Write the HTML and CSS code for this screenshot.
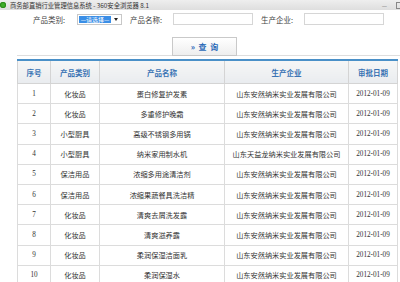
FILE: index.html
```html
<!DOCTYPE html>
<html>
<head>
    <meta charset="UTF-8">
    <title>商务部直销行业管理信息系统</title>
    <link rel="stylesheet" href="styles.css">
</head>
<body>
    <div class="titlebar">
        <span class="logo"></span>
        <span class="title">商务部直销行业管理信息系统 - 360安全浏览器 8.1</span>
        <span class="win-btn">—</span>
        <span class="win-btn max"></span>
    </div>

    <div class="search">
        <div class="search-row">
            <label class="lbl lbl-first">产品类别:</label>
            <div class="select">
                <span class="select-text">—请选择—</span>
                <span class="select-arrow"></span>
            </div>
            <label class="lbl">产品名称:</label>
            <input type="text" class="field">
            <label class="lbl">生产企业:</label>
            <input type="text" class="field">
        </div>
        <div class="btn-row">
            <button type="button" class="btn">»&nbsp;&nbsp;查&nbsp;&nbsp;询</button>
        </div>
    </div>

    <div class="list">
        <table class="grid">
            <colgroup>
                <col style="width:33px">
                <col style="width:49px">
                <col style="width:125px">
                <col style="width:124px">
                <col>
            </colgroup>
            <thead>
                <tr>
                    <th>序号</th>
                    <th>产品类别</th>
                    <th>产品名称</th>
                    <th>生产企业</th>
                    <th>审批日期</th>
                </tr>
            </thead>
            <tbody>
                <tr><td class="num">1</td><td>化妆品</td><td>蛋白修复护发素</td><td>山东安然纳米实业发展有限公司</td><td class="num">2012-01-09</td></tr>
                <tr><td class="num">2</td><td>化妆品</td><td>多重修护晚霜</td><td>山东安然纳米实业发展有限公司</td><td class="num">2012-01-09</td></tr>
                <tr><td class="num">3</td><td>小型厨具</td><td>高级不锈钢多用锅</td><td>山东安然纳米实业发展有限公司</td><td class="num">2012-01-09</td></tr>
                <tr><td class="num">4</td><td>小型厨具</td><td>纳米家用制水机</td><td>山东天益龙纳米实业发展有限公司</td><td class="num">2012-01-09</td></tr>
                <tr><td class="num">5</td><td>保洁用品</td><td>浓缩多用途清洁剂</td><td>山东安然纳米实业发展有限公司</td><td class="num">2012-01-09</td></tr>
                <tr><td class="num">6</td><td>保洁用品</td><td>浓缩果蔬餐具洗洁精</td><td>山东安然纳米实业发展有限公司</td><td class="num">2012-01-09</td></tr>
                <tr><td class="num">7</td><td>化妆品</td><td>清爽去屑洗发露</td><td>山东安然纳米实业发展有限公司</td><td class="num">2012-01-09</td></tr>
                <tr><td class="num">8</td><td>化妆品</td><td>清爽滋养露</td><td>山东安然纳米实业发展有限公司</td><td class="num">2012-01-09</td></tr>
                <tr><td class="num">9</td><td>化妆品</td><td>柔润保湿洁面乳</td><td>山东安然纳米实业发展有限公司</td><td class="num">2012-01-09</td></tr>
                <tr><td class="num">10</td><td>化妆品</td><td>柔润保湿水</td><td>山东安然纳米实业发展有限公司</td><td class="num">2012-01-09</td></tr>
            </tbody>
        </table>
    </div>
</body>
</html>
```

FILE: styles.css
```css
body {
    margin: 0;
    background: #fff;
    font-family: "Noto Sans CJK SC", "Liberation Sans", sans-serif;
    color: #333;
    overflow: hidden;
}
.titlebar {
    height: 10px;
    display: flex;
    align-items: center;
    background: linear-gradient(#eeeeee, #dedede);
    font-size: 6.3px;
    color: #333;
}
.logo {
    width: 6px;
    height: 6px;
    border-radius: 50%;
    background: #3fae2a;
    box-shadow: inset 0 0 0 1px #2d8a1c;
}
.title {
    margin-left: 4px;
    flex: 1;
    white-space: nowrap;
}
.win-btn {
    color: #777;
    font-size: 6px;
    margin-right: 9px;
}
.win-btn.max {
    width: 4px;
    height: 5px;
    border: 1px solid #888;
    margin-right: -2px;
}
.search {
    height: 42px;
    padding-top: 3px;
}
.search-row {
    display: flex;
    align-items: center;
    height: 12px;
    font-size: 7.5px;
    color: #444;
}
.lbl {
    width: 43px;
    margin-left: 8px;
    white-space: nowrap;
}
.lbl-first {
    width: 44px;
    margin-left: 33px;
}
.select {
    width: 45px;
    height: 11px;
    box-sizing: border-box;
    border: 1px solid #c8c8c8;
    display: flex;
    align-items: center;
    padding: 1px;
}
.select-text {
    flex: 1;
    height: 7px;
    line-height: 7px;
    background: #3a8ee6;
    color: #fff;
    font-size: 6px;
    text-align: center;
    white-space: nowrap;
    overflow: hidden;
}
.select-arrow {
    width: 0;
    height: 0;
    margin: 0 2px 0 3px;
    border-left: 2px solid transparent;
    border-right: 2px solid transparent;
    border-top: 3px solid #222;
}
.field {
    width: 80px;
    height: 12px;
    box-sizing: border-box;
    border: 1px solid #d6d6d6;
    padding: 0;
    margin: 0;
}
.btn-row {
    margin: 6px 0 0 172px;
}
.btn {
    width: 65px;
    height: 19px;
    border: 1px solid #c9c9c9;
    background: linear-gradient(#ffffff, #eeeeee);
    color: #2a6ab8;
    font-family: "Noto Sans CJK SC", sans-serif;
    font-size: 8px;
    font-weight: bold;
    padding: 0;
}
.list {
    margin-left: 17px;
    border-top: 1px solid #dedede;
    padding-top: 3px;
}
.grid {
    width: 381px;
    border-collapse: collapse;
    table-layout: fixed;
    border-top: 2px solid #4a90c8;
}
.grid th {
    height: 22px;
    padding: 0;
    background: linear-gradient(#f6f6f6, #e9ecef);
    color: #3a74b4;
    font-size: 7.5px;
    font-weight: bold;
    border: 1px solid #d4d4d4;
    border-top: none;
}
.grid td {
    height: 19.2px;
    padding: 0;
    text-align: center;
    font-size: 7.2px;
    color: #333;
    border: 1px solid #dcdcdc;
    white-space: nowrap;
}
.grid td.num {
    font-family: "Liberation Serif", serif;
    font-size: 7.2px;
}
```
